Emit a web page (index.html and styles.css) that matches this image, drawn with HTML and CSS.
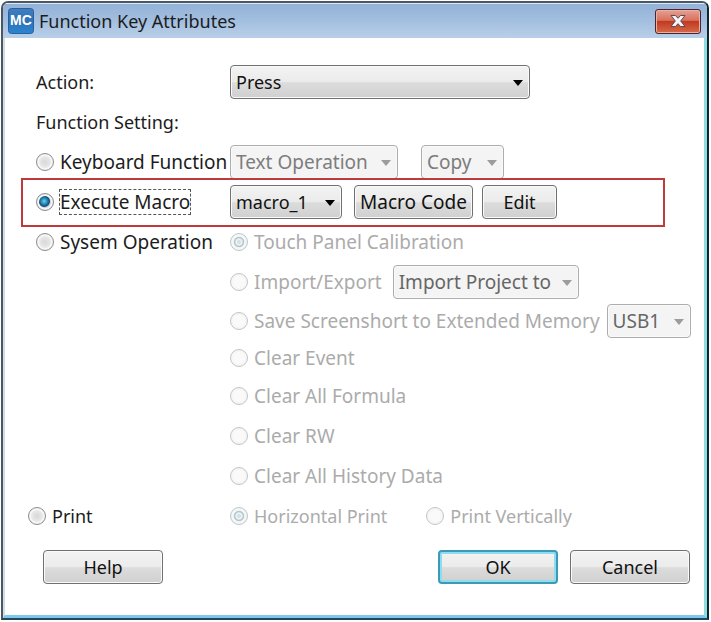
FILE: index.html
```html
<!DOCTYPE html>
<html lang="en">
<head>
    <meta charset="utf-8">
    <title>Function Key Attributes</title>
    <link rel="stylesheet" href="styles.css">
</head>
<body>
    <div class="dialog">
        <header class="titlebar">
            <svg class="logo" viewBox="0 0 26 26" aria-hidden="true">
                <defs>
                    <linearGradient id="logo-fill" x1="0" y1="0" x2="0" y2="1">
                        <stop offset="0" stop-color="#3f7fc0"/>
                        <stop offset="0.5" stop-color="#2f70b8"/>
                        <stop offset="1" stop-color="#2a86cf"/>
                    </linearGradient>
                </defs>
                <rect x="0.5" y="0.5" width="25" height="25" rx="3" fill="url(#logo-fill)" stroke="#2a5f9e"/>
                <text class="logo-text" x="13" y="17" text-anchor="middle">MC</text>
            </svg>
            <h1 class="title">Function Key Attributes</h1>
            <button class="close" type="button" aria-label="Close">
                <svg viewBox="0 0 16 14" aria-hidden="true">
                    <path d="M1 1.5h4.5L8 4.300l2.500-2.800H15L10.700 7l4.300 5.500h-4.500L8 9.700l-2.500 2.800H1L5.300 7z" fill="#f4f4f4" stroke="#5b4a58" stroke-width="1"/>
                </svg>
            </button>
        </header>

        <form class="content">
            <div class="row">
                <label class="name" for="action">Action:</label>
                <span class="select select-action">
                    <select id="action"><option>Press</option></select>
                </span>
            </div>
            <div class="row">
                <span class="name">Function Setting:</span>
            </div>

            <div class="row">
                <label class="name radio"><input type="radio" name="function"><span>Keyboard Function</span></label>
                <span class="select select-text">
                    <select aria-label="Keyboard function" disabled><option>Text Operation</option></select>
                </span>
                <span class="select select-copy">
                    <select aria-label="Text operation" disabled><option>Copy</option></select>
                </span>
            </div>

            <div class="row highlight">
                <label class="name radio focused"><input type="radio" name="function" checked><span>Execute Macro</span></label>
                <span class="select select-macro">
                    <select aria-label="Macro"><option>macro_1</option></select>
                </span>
                <button class="btn btn-code" type="button">Macro Code</button>
                <button class="btn btn-edit" type="button">Edit</button>
            </div>

            <div class="row system">
                <label class="name radio"><input type="radio" name="function"><span>Sysem Operation</span></label>
                <div class="options">
                    <div class="row">
                        <label class="radio"><input type="radio" name="system" checked disabled><span>Touch Panel Calibration</span></label>
                    </div>
                    <div class="row">
                        <label class="radio"><input type="radio" name="system" disabled><span>Import/Export</span></label>
                        <span class="select select-import">
                            <select aria-label="Import or export" disabled><option>Import Project to</option></select>
                        </span>
                    </div>
                    <div class="row tight">
                        <label class="radio"><input type="radio" name="system" disabled><span>Save Screenshort to Extended Memory</span></label>
                        <span class="select select-usb">
                            <select aria-label="Extended memory" disabled><option>USB1</option></select>
                        </span>
                    </div>
                    <div class="row tight">
                        <label class="radio"><input type="radio" name="system" disabled><span>Clear Event</span></label>
                    </div>
                    <div class="row">
                        <label class="radio"><input type="radio" name="system" disabled><span>Clear All Formula</span></label>
                    </div>
                    <div class="row">
                        <label class="radio"><input type="radio" name="system" disabled><span>Clear RW</span></label>
                    </div>
                    <div class="row">
                        <label class="radio"><input type="radio" name="system" disabled><span>Clear All History Data</span></label>
                    </div>
                </div>
            </div>

            <div class="row print">
                <label class="name radio"><input type="radio" name="function"><span>Print</span></label>
                <label class="radio"><input type="radio" name="print" checked disabled><span>Horizontal Print</span></label>
                <label class="radio"><input type="radio" name="print" disabled><span>Print Vertically</span></label>
            </div>

            <div class="actions">
                <button class="btn btn-wide btn-help" type="button">Help</button>
                <button class="btn btn-wide btn-default" type="button">OK</button>
                <button class="btn btn-wide" type="button">Cancel</button>
            </div>
        </form>
    </div>
</body>
</html>
```

FILE: styles.css
```css
* {
    box-sizing: border-box;
}
body {
    margin: 0;
    padding: 1px 2px 3px 1px;
    background: #fff;
    border-bottom: 1px solid #c4c4c4;
    font-family: "Noto Sans", "Open Sans", sans-serif;
    font-size: 18px;
    line-height: 24px;
    color: #1c1c1c;
}

/* window frame */
.dialog {
    border: 2px solid #4a5866;
    border-right-color: #10262b;
    border-bottom-color: #24475a;
    border-radius: 7px 7px 0 0;
    background: #fff;
    overflow: hidden;
}
.titlebar {
    display: flex;
    align-items: center;
    gap: 5px;
    height: 35px;
    padding: 0 6px 0 5px;
    border-top: 1px solid #dceaf6;
    background: linear-gradient(#93b2d7, #a3bfe0 50%, #b9cfe8);
}
.logo {
    width: 26px;
    height: 26px;
}
.logo-text {
    font: bold 14px "Liberation Sans", sans-serif;
    fill: #fff;
}
.title {
    flex: 1;
    margin: 0;
    font-size: 18px;
    font-weight: normal;
}
.close {
    display: flex;
    align-items: center;
    justify-content: center;
    width: 46px;
    height: 25px;
    padding: 0;
    border: 1px solid #4c2330;
    border-radius: 3px;
    background: linear-gradient(#e5a194, #d9705c 45%, #c23a20 50%, #d66a4a);
    box-shadow: inset 0 0 0 1px #eab0a0;
}
.close svg {
    width: 16px;
    height: 14px;
}

.content {
    padding: 24px 14px 31px 31px;
    border-left: 2px solid #d3dde4;
    border-right: 3px solid #8fdde2;
    border-bottom: 3px solid #7cc8ee;
}
.row {
    display: flex;
    align-items: center;
    height: 40px;
}
.row.tight {
    height: 37px;
}
.name {
    flex: 0 0 194px;
    white-space: nowrap;
}

/* radios */
.radio {
    display: flex;
    align-items: center;
    gap: 6px;
    font-size: 19px;
    white-space: nowrap;
}
.radio input {
    appearance: none;
    flex: none;
    width: 18px;
    height: 18px;
    margin: 0;
    border: 1px solid #8c8c8c;
    border-radius: 50%;
    background: radial-gradient(circle, #d8d8d8, #ececec 60%);
    box-shadow: inset 0 0 0 2px #f6f6f6;
}
.radio input:checked {
    background: radial-gradient(circle at 45% 45%, #6fd0ee 0, #1c7fae 28%, #164a70 42%, #c4cfdc 50%);
}
.radio input:disabled {
    border-color: #c4c4c4;
    background: #fafafa;
}
.radio input:disabled:checked {
    border-color: #b8c8cc;
    background: radial-gradient(circle, #d4e2e5 0 15%, #eef4f5 20% 28%, #b4c8ce 36% 42%, #f6f6f6 50%);
}
.radio input:disabled + span {
    color: #ababab;
}
.focused span {
    outline: 1px dashed #555;
}

/* drop-downs */
.select {
    position: relative;
    flex: none;
}
.select::after {
    content: "";
    position: absolute;
    top: 15px;
    right: 7px;
    border: 5px solid transparent;
    border-top: 6px solid #000;
    border-bottom: 0;
    pointer-events: none;
}
.select:has(:disabled)::after {
    border-top-color: #9c9c9c;
}
select,
.btn {
    height: 34px;
    border: 1px solid #707070;
    border-radius: 4px;
    background: linear-gradient(#f3f3f3, #ebebeb 50%, #dcdcdc 52%, #d0d0d0);
    box-shadow: inset 0 0 0 1px #fafafa;
    font: inherit;
    color: #111;
}
select {
    display: block;
    appearance: none;
    width: 100%;
    padding: 0 5px;
}
select:disabled {
    border-color: #adadad;
    background: #f4f4f4;
    font-size: 19px;
    color: #7d7d7d;
    opacity: 1;
}
.options select:disabled {
    color: #666;
}
.select-action {
    width: 300px;
}
.select-text {
    width: 168px;
    margin-right: 23px;
}
.select-copy {
    width: 83px;
}
.select-macro {
    width: 112px;
    margin-right: 12px;
}
.select-import {
    width: 186px;
    margin-left: 11px;
}
.select-usb {
    width: 84px;
    margin-left: 7px;
}

/* red frame round the macro row */
.highlight {
    position: relative;
}
.highlight::after {
    content: "";
    position: absolute;
    inset: -4px 25px -5px -15px;
    border: 2px solid #bf3b3b;
    pointer-events: none;
}

.btn {
    padding: 0;
    text-align: center;
}
.btn-code {
    width: 119px;
    margin-right: 9px;
    font-size: 19px;
}
.btn-edit {
    width: 75px;
}
.btn-wide {
    width: 120px;
}
.btn-default {
    border: 2px solid #3a9ab8;
    box-shadow: inset 0 0 0 2px #8fdcec;
}

.system {
    height: auto;
    align-items: flex-start;
}
.system > .name {
    height: 40px;
}
.print {
    gap: 39px;
    margin-left: -8px;
}
.print .name {
    flex-basis: 163px;
}
.print .radio {
    font-size: 18px;
}
.actions {
    display: flex;
    gap: 12px;
    padding: 14px 0 0 7px;
}
.btn-help {
    margin-right: auto;
}
```
